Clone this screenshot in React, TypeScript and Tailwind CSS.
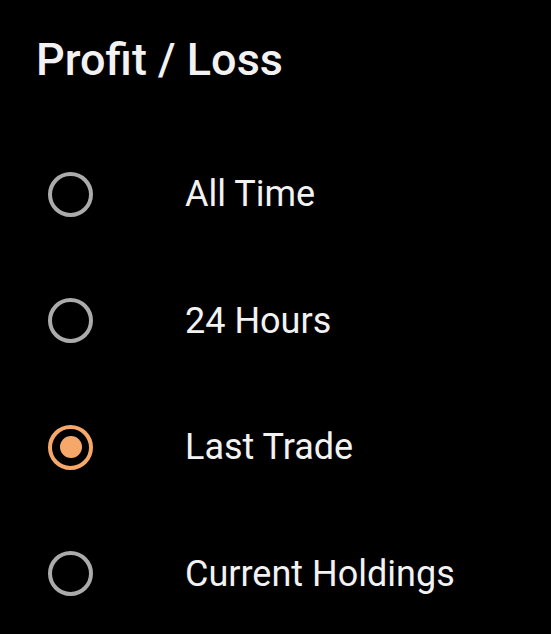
import { useState } from 'react';

const options = ['All Time', '24 Hours', 'Last Trade', 'Current Holdings'];

export default function App() {
  const [selected, setSelected] = useState('Last Trade');

  return (
    <div className="w-[551px] h-[634px] bg-black text-white overflow-hidden font-['Roboto',sans-serif]">
      <h1 className="pl-[36px] pt-[36px] text-[45px] leading-[48px] font-medium text-[#f2f2f2]">
        Profit / Loss
      </h1>

      <div className="mt-[47px] flex flex-col">
        {options.map((opt) => {
          const on = opt === selected;
          return (
            <button
              key={opt}
              onClick={() => setSelected(opt)}
              className="flex items-center h-[126.5px] pl-[48px] text-left"
            >
              <span
                className={
                  'w-[45px] h-[45px] rounded-full border-[4px] flex items-center justify-center shrink-0 ' +
                  (on ? 'border-[#f6a86a]' : 'border-[#ababab]')
                }
              >
                {on && <span className="w-[22px] h-[22px] rounded-full bg-[#f6a86a]" />}
              </span>
              <span className="ml-[92px] text-[36px] text-[#f2f2f2]">{opt}</span>
            </button>
          );
        })}
      </div>
    </div>
  );
}
